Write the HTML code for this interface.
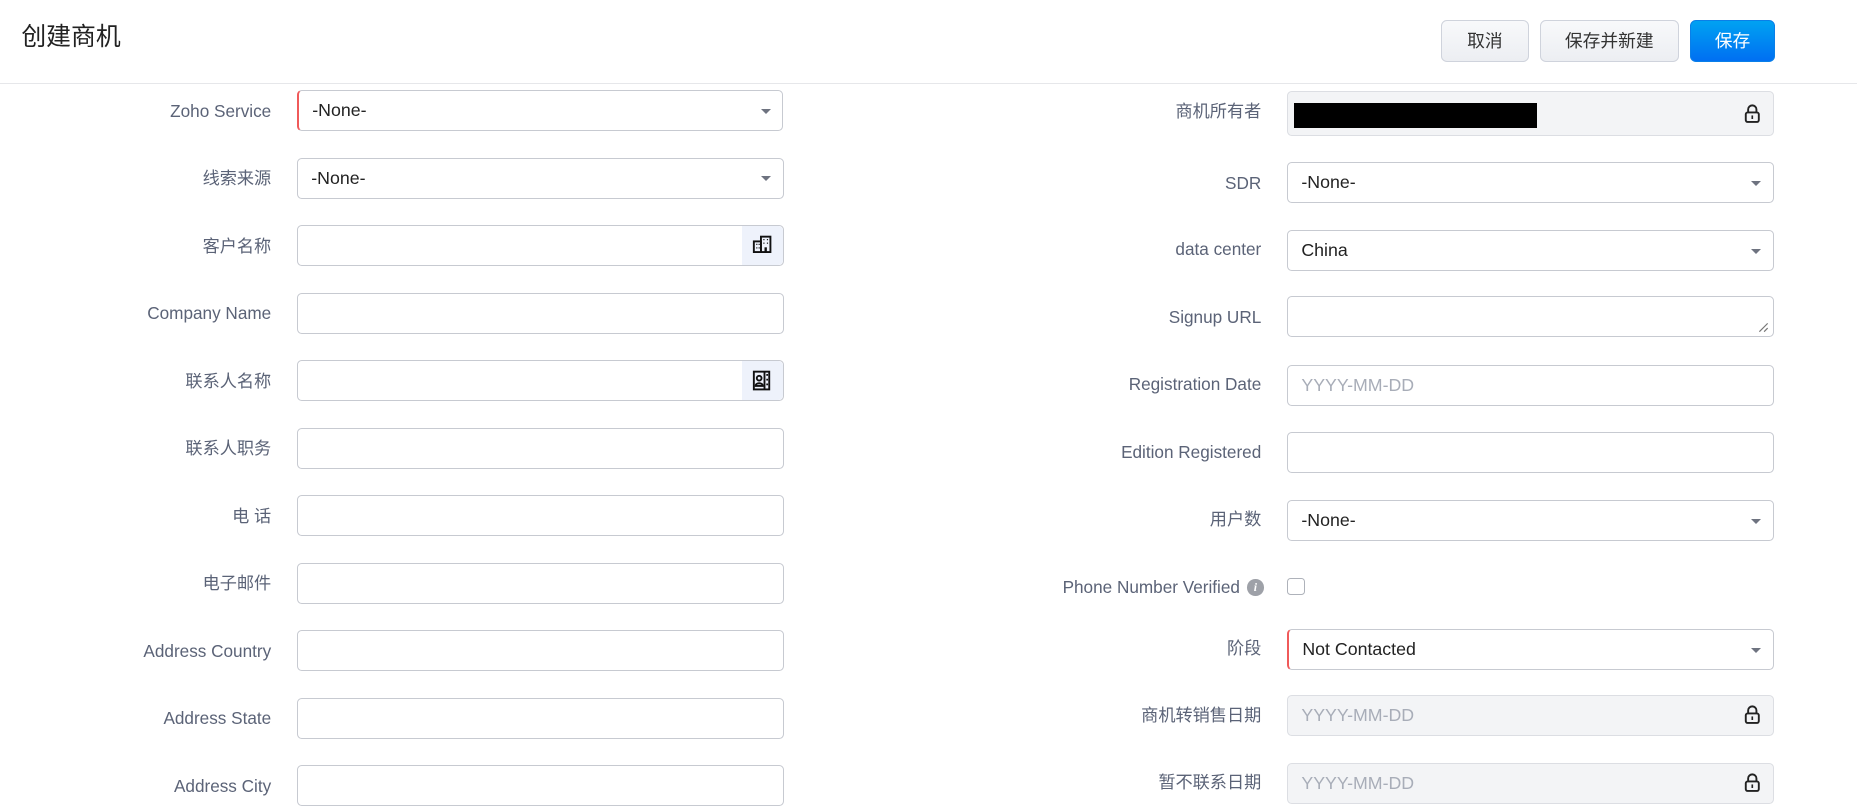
<!DOCTYPE html>
<html><head><meta charset="utf-8"><style>
html,body{margin:0;padding:0;background:#fff;overflow:hidden}
body{width:1857px;height:810px}
#w{zoom:1.18431;position:relative;width:1568px;height:684px;font-family:"Liberation Sans","Noto Sans CJK SC",sans-serif}
.t{position:absolute;left:18px;top:18px;font-size:21px;line-height:28px;color:#222}
.hl{position:absolute;left:0;top:70px;width:1568px;height:1px;background:#e6e7ea}
.b{position:absolute;top:17px;height:34px;border:1px solid #cfd3dc;border-radius:5px;background:linear-gradient(#f8f9fb,#eceef2);font-size:15px;color:#333;text-align:center;line-height:34px}
.lb{position:absolute;text-align:right;font-size:14.5px;line-height:18px;color:#5b6377;width:300px}
.in{position:absolute;width:409px;height:33px;border:1px solid #c7cad1;border-radius:4px;box-sizing:content-box;font-size:15px;color:#222;line-height:33px;padding-left:0;background:#fff}
.in span{position:absolute;left:11px}
.ph{color:#a8adb8}
.dd:after{content:"";position:absolute;right:10px;top:15px;border-left:5px solid transparent;border-right:5px solid transparent;border-top:5px solid #6e7380}
.req{border-left:2px solid #f05a5a;width:408px}
.lk{background:#f3f4f6;border-color:#dcdee3}
.ic{position:absolute;right:0;top:0;width:34px;height:33px;background:#eef2fb;border-radius:0 4px 4px 0}
</style></head><body><div id="w">
<div class="t">创建商机</div>
<div class="hl"></div>
<div class="b" style="left:1217px;width:72px">取消</div>
<div class="b" style="left:1300px;width:116px">保存并新建</div>
<div class="b" style="left:1427px;width:70px;border-color:#0a7fe8;background:linear-gradient(#00a2f2,#006ff2);color:#fff">保存</div>

<!-- left -->
<div class="lb" style="left:-71px;top:85px">Zoho Service</div>
<div class="in dd req" style="left:251px;top:76px"><span>-None-</span></div>
<div class="lb" style="left:-71px;top:142px">线索来源</div>
<div class="in dd" style="left:251px;top:133px"><span>-None-</span></div>
<div class="lb" style="left:-71px;top:199px">客户名称</div>
<div class="in" style="left:251px;top:190px"><div class="ic"><svg width="34" height="33" viewBox="0 0 34 33"><g fill="none" stroke="#111" stroke-width="1.6"><rect x="10" y="13" width="6" height="9"/><rect x="16" y="9" width="8" height="13"/></g><g fill="#111"><rect x="12" y="15" width="1" height="1"/><rect x="14" y="15" width="1" height="1"/><rect x="12" y="18" width="1" height="1"/><rect x="14" y="18" width="1" height="1"/><rect x="18" y="11" width="1" height="1"/><rect x="21" y="11" width="1" height="1"/><rect x="18" y="14" width="1" height="1"/><rect x="21" y="14" width="1" height="1"/><rect x="19" y="18" width="2" height="4"/></g></svg></div></div>
<div class="lb" style="left:-71px;top:256px">Company Name</div>
<div class="in" style="left:251px;top:247px"></div>
<div class="lb" style="left:-71px;top:313px">联系人名称</div>
<div class="in" style="left:251px;top:304px"><div class="ic"><svg width="34" height="33" viewBox="0 0 34 33"><g fill="none" stroke="#111" stroke-width="1.6"><rect x="10" y="9" width="13" height="15"/><line x1="19" y1="9" x2="19" y2="24"/><circle cx="14.5" cy="14.5" r="2"/><path d="M11.5 21c0-3 6-3 6 0z"/></g><g fill="#111"><rect x="20.5" y="11" width="1.5" height="1.5"/><rect x="20.5" y="15" width="1.5" height="1.5"/><rect x="20.5" y="19" width="1.5" height="1.5"/></g></svg></div></div>
<div class="lb" style="left:-71px;top:370px">联系人职务</div>
<div class="in" style="left:251px;top:361px"></div>
<div class="lb" style="left:-71px;top:427px">电 话</div>
<div class="in" style="left:251px;top:418px"></div>
<div class="lb" style="left:-71px;top:484px">电子邮件</div>
<div class="in" style="left:251px;top:475px"></div>
<div class="lb" style="left:-71px;top:541px">Address Country</div>
<div class="in" style="left:251px;top:532px"></div>
<div class="lb" style="left:-71px;top:598px">Address State</div>
<div class="in" style="left:251px;top:589px"></div>
<div class="lb" style="left:-71px;top:655px">Address City</div>
<div class="in" style="left:251px;top:646px"></div>

<!-- right -->
<div class="lb" style="left:765px;top:85px">商机所有者</div>
<div class="in lk" style="left:1087px;top:77px;height:36px"><div style="position:absolute;left:5px;top:9px;width:205px;height:21px;background:#000"></div><svg style="position:absolute;right:10px;top:9px" width="14" height="18" viewBox="0 0 14 18"><path d="M3.5 8V5.5a3.5 3.5 0 0 1 7 0V8" fill="none" stroke="#222" stroke-width="1.6"/><rect x="1.5" y="8" width="11" height="8" rx="1.5" fill="none" stroke="#222" stroke-width="1.6"/><rect x="6.3" y="10.5" width="1.4" height="3" fill="#222"/></svg></div>
<div class="lb" style="left:765px;top:146px">SDR</div>
<div class="in dd" style="left:1087px;top:137px"><span>-None-</span></div>
<div class="lb" style="left:765px;top:202px">data center</div>
<div class="in dd" style="left:1087px;top:194px"><span>China</span></div>
<div class="lb" style="left:765px;top:259px">Signup URL</div>
<div class="in" style="left:1087px;top:250px"><svg style="position:absolute;right:3px;bottom:3px" width="10" height="10"><path d="M9 2L2 9M9 6L6 9" stroke="#777" stroke-width="1"/></svg></div>
<div class="lb" style="left:765px;top:316px">Registration Date</div>
<div class="in" style="left:1087px;top:308px"><span class="ph">YYYY-MM-DD</span></div>
<div class="lb" style="left:765px;top:373px">Edition Registered</div>
<div class="in" style="left:1087px;top:365px"></div>
<div class="lb" style="left:765px;top:430px">用户数</div>
<div class="in dd" style="left:1087px;top:422px"><span>-None-</span></div>
<div class="lb" style="left:747px;top:487px">Phone Number Verified</div>
<div style="position:absolute;left:1053px;top:489px;width:14px;height:14px;border-radius:50%;background:#9ea1a8;color:#fff;font-size:10px;font-weight:bold;font-style:italic;text-align:center;line-height:14px;font-family:'Liberation Serif',serif">i</div>
<div style="position:absolute;left:1087px;top:488px;width:13px;height:13px;border:1px solid #aeb2ba;border-radius:3px"></div>
<div class="lb" style="left:765px;top:539px">阶段</div>
<div class="in dd req" style="left:1087px;top:531px"><span>Not Contacted</span></div>
<div class="lb" style="left:765px;top:595px">商机转销售日期</div>
<div class="in lk" style="left:1087px;top:587px"><span class="ph">YYYY-MM-DD</span><svg style="position:absolute;right:10px;top:7px" width="14" height="18" viewBox="0 0 14 18"><path d="M3.5 8V5.5a3.5 3.5 0 0 1 7 0V8" fill="none" stroke="#222" stroke-width="1.6"/><rect x="1.5" y="8" width="11" height="8" rx="1.5" fill="none" stroke="#222" stroke-width="1.6"/><rect x="6.3" y="10.5" width="1.4" height="3" fill="#222"/></svg></div>
<div class="lb" style="left:765px;top:652px">暂不联系日期</div>
<div class="in lk" style="left:1087px;top:644px"><span class="ph">YYYY-MM-DD</span><svg style="position:absolute;right:10px;top:7px" width="14" height="18" viewBox="0 0 14 18"><path d="M3.5 8V5.5a3.5 3.5 0 0 1 7 0V8" fill="none" stroke="#222" stroke-width="1.6"/><rect x="1.5" y="8" width="11" height="8" rx="1.5" fill="none" stroke="#222" stroke-width="1.6"/><rect x="6.3" y="10.5" width="1.4" height="3" fill="#222"/></svg></div>
</div></body></html>
